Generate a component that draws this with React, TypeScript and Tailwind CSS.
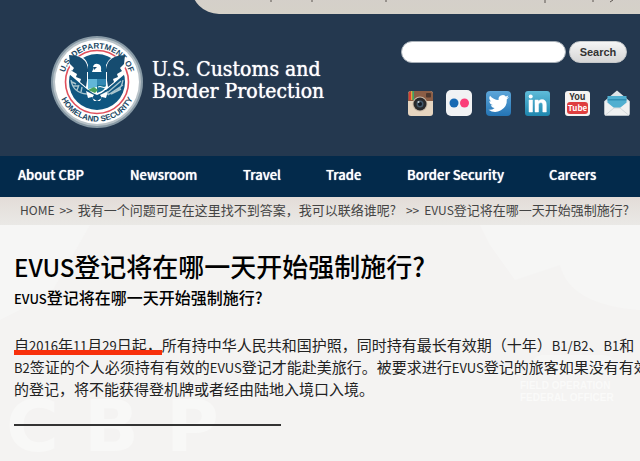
import type { ReactNode } from 'react'

const navItems = [
  { label: 'About CBP', width: 'w-[112px]' },
  { label: 'Newsroom', width: 'w-[113px]' },
  { label: 'Travel', width: 'w-[83px]' },
  { label: 'Trade', width: 'w-[81px]' },
  { label: 'Border Security', width: 'w-[142px]' },
  { label: 'Careers', width: 'w-[60px]' },
]

function Seal() {
  return (
    <svg viewBox="0 0 92 92" className="w-[92px] h-[92px] shrink-0" role="img" aria-label="Seal">
      <defs>
        <path id="arcTop" d="M 14.4 57.5 A 33.6 33.6 0 1 1 77.6 57.5" />
        <path id="arcBottom" d="M 6.5 46 A 39.5 39.5 0 0 0 85.5 46" />
        <clipPath id="disc">
          <circle cx="46" cy="46" r="27" />
        </clipPath>
      </defs>
      <circle cx="46" cy="46" r="46" fill="#8799a5" />
      <circle cx="46" cy="46" r="44" fill="#b9c3c9" />
      <circle cx="46" cy="46" r="42" fill="#fff" />
      <circle cx="46" cy="46" r="31.5" fill="#fff" stroke="#e0505c" strokeWidth="1.6" />
      <circle cx="46" cy="46" r="28" fill="#0f5680" />
      {/* eagle wings */}
      <path d="M17 18 L27 20 Q35 21 37 29 L37 37 L41 38 L51 38 L55 37 L55 29 Q58 21 66 20 L75 18 Q77 28 72 35 L74 38 L68 43 L61 49 L55 54 L37 54 L31 49 L24 43 L18 38 L21 34 Q16 28 17 18Z" fill="#fff" />
      <path d="M18 19 Q29 19 34 25 Q38 31 37 38 L35 51 L29 46 L30 43 L25 41 L26 38 L21 35 L23 32 L19 28Z" fill="#164c70" />
      <path d="M74 19 Q63 19 58 25 Q54 31 55 38 L57 51 L63 46 L62 43 L67 41 L66 38 L71 35 L69 32 L73 28Z" fill="#164c70" />
      <g fill="#1b4763" fontFamily="Liberation Sans, sans-serif" fontWeight="bold" fontSize="8" textAnchor="middle">
        <text><textPath href="#arcTop" startOffset="50%">U.S. DEPARTMENT OF</textPath></text>
        <text><textPath href="#arcBottom" startOffset="50%">HOMELAND SECURITY</textPath></text>
      </g>
      {/* head */}
      <path d="M38 21 H54 L53 28 H39Z" fill="#0f5680" />
      <path d="M41 36 Q43 33 42 31 Q43 27 47 28 Q51 29 50 35 L52 38 L40 38Z" fill="#fff" />
      <path d="M42 31 l4 0 -3 3z" fill="#164c70" />
      {/* shield */}
      <path d="M36 36 H56 V50 Q55 56 46 59 Q37 56 36 50Z" fill="#fff" />
      <path d="M37 36 H55 V43 H37Z" fill="#0f5680" />
      <path d="M37 43 H46 V51 L37 53Z" fill="#62b6d8" />
      <path d="M46 43 H55 V49 H46Z" fill="#3287b2" />
      <path d="M46 49 H55 Q55 54 46 57Z" fill="#197295" />
      <path d="M47 51 q2 -1 4 0 t4 0" stroke="#fff" strokeWidth="1" fill="none" />
      <path d="M37 54 L43 51 L47 54 L44 57Z" fill="#4aa35c" />
      {/* tail and talons */}
      <path d="M35 55 L43 59 L41 62 L46 65 L51 62 L49 59 L57 55 L55 62 L51 61 L49 65 H43 L41 61 L37 62Z" fill="#fff" />
      <g clipPath="url(#disc)" fill="none" strokeWidth="1.4">
        <path d="M20 44 Q22 57 36 58 M22 50 l5 0 M26 54 l2 -5 M30 56 l1 -5 M21 46 l4 2" stroke="#a8c4cd" />
        <path d="M72 44 Q70 57 56 58 M56 57 L70 45 M57 59 L72 49 M60 58 L70 53" stroke="#a8c4cd" />
      </g>
    </svg>
  )
}

function Social({ label, children }: { label: string; children: ReactNode }) {
  return (
    <a href="#" aria-label={label} className="block">
      <svg viewBox="0 0 26 26" className="w-[26px] h-[26px]">{children}</svg>
    </a>
  )
}

function SocialLinks() {
  return (
    <div className="flex justify-between w-[223px] ml-[6px]">
      <Social label="Instagram">
        <rect x="1" y="1" width="25" height="25" rx="3" fill="#e6d5c0" />
        <path d="M1 11V4a3 3 0 0 1 3-3h19a3 3 0 0 1 3 3v7z" fill="#8c5e46" />
        <path d="M2 2h2v8H2z" fill="#d83f38" />
        <path d="M4 1h1.500v9H4z" fill="#dfa83d" />
        <path d="M5.500 1H7v9H5.500z" fill="#39a76a" />
        <rect x="19" y="3" width="5" height="4.500" rx="1" fill="#4d382f" />
        <circle cx="13" cy="14" r="7.500" fill="#c9b9a7" />
        <circle cx="13" cy="14" r="6.500" fill="#29292c" />
        <circle cx="13" cy="14" r="3.500" fill="#43576a" />
        <circle cx="13" cy="14" r="2" fill="#141a24" />
        <circle cx="11.500" cy="12" r="1" fill="#c4cdd5" />
      </Social>
      <Social label="Flickr">
        <rect x="0" y="0" width="26" height="26" rx="5" fill="#f1f2f4" />
        <circle cx="8" cy="13" r="4.500" fill="#1769b3" />
        <circle cx="18.500" cy="13" r="4.500" fill="#fb3d78" />
      </Social>
      <Social label="Twitter">
        <defs>
          <linearGradient id="tw" x2="0" y2="1">
            <stop stopColor="#5da6da" />
            <stop offset="1" stopColor="#2474b4" />
          </linearGradient>
        </defs>
        <rect x="0" y="1" width="25" height="25" rx="4" fill="url(#tw)" />
        <path transform="translate(0 2)" d="M23 5.100a8 8 0 0 1-2.400.7 4.300 4.300 0 0 0 1.800-2.400 8 8 0 0 1-2.600 1A4.200 4.200 0 0 0 12.600 8 11.500 11.500 0 0 1 4 3.800a4.300 4.300 0 0 0 1.200 5.600 4 4 0 0 1-1.800-.5c0 2 1.400 3.700 3.300 4.100a4 4 0 0 1-1.900.1 4.200 4.200 0 0 0 3.900 2.900A8.200 8.200 0 0 1 2.500 17.800 11.700 11.700 0 0 0 20.800 7.300 8 8 0 0 0 23 5.100z" fill="#fff" />
      </Social>
      <Social label="LinkedIn">
        <defs>
          <linearGradient id="li" x2="0" y2="1">
            <stop stopColor="#5fbcd9" />
            <stop offset="1" stopColor="#1e86ae" />
          </linearGradient>
        </defs>
        <rect x="0" y="1" width="25" height="25" rx="3" fill="url(#li)" />
        <path d="M4 10h3.500v12H4zM10 10h3.300v1.600c.8-1.300 2-2 3.700-2 2.800 0 4.300 1.800 4.300 5V22h-3.500v-6.700c0-1.700-.6-2.700-2-2.700-1.500 0-2.300 1-2.300 2.700V22H10z" fill="#fff" stroke="#fff" strokeWidth=".5" />
        <circle cx="5.700" cy="6.500" r="2" fill="#fff" />
      </Social>
      <Social label="YouTube">
        <rect x="0" y="1" width="25" height="25" rx="3" fill="#f6f4f2" />
        <rect x="2" y="12" width="21" height="12" rx="3" fill="#df3e3e" />
        <g fontFamily="Noto Sans CJK SC, sans-serif" fontWeight="bold" textAnchor="middle">
          <text x="12.500" y="10" fontSize="9" fill="#333">You</text>
          <text x="12.500" y="21" fontSize="8" fill="#fff">Tube</text>
        </g>
      </Social>
      <Social label="Email">
        <path d="M0.500 11 L13 0.500 L25.500 11 V24 Q25.500 25.500 24 25.500 H2 Q0.500 25.500 0.500 24Z" fill="#dfe5e8" />
        <path d="M3.500 6h19v6.500L16 18h-6l-6.500-5.500z" fill="#50afd0" />
        <path d="M3.500 9h19v1.500h-19z" fill="#2f8fb4" />
        <path d="M0.500 11 L10 18h6l9.500-7V24q0 1.500-1.500 1.500H2Q.5 25.500.5 24z" fill="#f0f1f1" />
        <path d="M1.500 25 L10 18h6l8.500 7" fill="none" stroke="#d3d8da" />
      </Social>
    </div>
  )
}

/* Faint uniform photo and lettering behind the article */
function Backdrop() {
  return (
    <svg className="absolute inset-0 w-full h-full" viewBox="0 0 640 235" preserveAspectRatio="xMinYMin slice" aria-hidden="true">
      <path d="M0 0H90L50 70L0 95Z" fill="#f6f6f5" />
      <path d="M480 0H640V85Q570 80 560 40L515 55L490 20Z" fill="#f6f6f5" />
      <path d="M530 141q2-11 14-11h58q12 0 14 11v8h-86z" fill="#f6f6f5" />
      <g fill="#f8f8f7" fontFamily="DejaVu Sans, sans-serif" fontWeight="bold">
        <text x="6" y="226" fontSize="72">C</text>
        <text x="84" y="226" fontSize="72">B</text>
        <text x="166" y="226" fontSize="72">P</text>
      </g>
      <g fill="#fafaf9" fontFamily="Liberation Sans, sans-serif" fontWeight="bold" fontSize="10">
        <text x="520" y="164">FIELD OPERATION</text>
        <text x="520" y="176">FEDERAL OFFICER</text>
      </g>
    </svg>
  )
}

export default function App() {
  return (
    <div lang="zh-CN" className="min-h-screen bg-[#f4f3f2] overflow-hidden font-['Noto_Sans_CJK_SC',sans-serif] text-black">
      <header className="bg-[#24384f]">
        <div className="h-[14px] overflow-hidden">
          <div className="ml-[191px] -mt-5 pt-5 h-[34px] rounded-bl-[28px] bg-linear-to-b from-[#d4cecc] to-[#d5d1c8]">
            <svg className="block w-[449px] h-[3px]" viewBox="0 0 449 3" aria-hidden="true">
              <path d="M80 0v2M121 0v2M195 0v2M354 0v3M402 0v2M422 0l-3 2" stroke="#5b5450" strokeWidth="1" fill="none" />
            </svg>
          </div>
        </div>
        <div className="flex items-start justify-between h-[142px]">
          <a href="#" className="flex items-start pl-[51px] pt-[22px] text-white">
            <Seal />
            <span className="ml-[9px] mt-[22px] font-['DejaVu_Serif_Condensed','DejaVu_Serif',serif] text-[21px] leading-[22px] whitespace-nowrap text-shadow-[0_0_1px_#fff]">
              U.S. Customs and
              <br />
              Border Protection
            </span>
          </a>
          <div className="w-[239px] shrink-0 pt-[27px]">
            <form className="flex items-center gap-[3px]" onSubmit={(e) => e.preventDefault()}>
              <input type="text" aria-label="Search" className="w-[165px] h-[22px] rounded-full bg-white border border-[#a8b0b8] px-3 text-sm" />
              <button type="submit" className="w-[58px] h-[22px] rounded-full border border-[#c5c8ca] bg-linear-to-b from-[#f5f5f5] to-[#d6d6d6] font-['Liberation_Sans',sans-serif] text-[11px] leading-[18px] font-bold text-[#333]">
                Search
              </button>
            </form>
            <div className="pt-[27px]">
              <SocialLinks />
            </div>
          </div>
        </div>
        <nav className="flex items-center h-[41px] pl-[18px] pb-1 bg-[#032a4b] text-[13px] font-medium text-white whitespace-nowrap text-shadow-[0_0_1px_#fff]">
          {navItems.map((item) => (
            <a key={item.label} href="#" className={item.width}>{item.label}</a>
          ))}
        </nav>
      </header>

      <nav aria-label="Breadcrumb" className="flex items-center h-[28px] pl-5 pb-[2px] bg-linear-to-b from-[#e3dcd8] to-[#eae9e6] text-[13px] text-[#444] whitespace-nowrap">
        <a href="#" className="text-[12px]">HOME</a>
        <span className="text-[12px] mx-[5px]">&gt;&gt;</span>
        <a href="#">我有一个问题可是在这里找不到答案，我可以联络谁呢?</a>
        <span className="text-[12px] ml-[10px] mr-[5px]">&gt;&gt;</span>
        <span><span className="text-[12px]">EVUS</span>登记将在哪一天开始强制施行?</span>
      </nav>

      <main className="relative pl-[14px] pt-[22px] pb-[34px]">
        <Backdrop />
        <div className="relative">
          <h1 className="text-[26px] leading-[38px] font-medium whitespace-nowrap">
            <span className="text-[24px]">EVUS</span>登记将在哪一天开始强制施行?
          </h1>
          <h2 className="text-[16px] leading-[22px] font-medium">
            <span className="text-[13px]">EVUS</span>登记将在哪一天开始强制施行?
          </h2>
          <p className="mt-[24px] text-[15px] leading-[22px] text-[#222] whitespace-nowrap">
            <span className="relative">
              自<span className="text-[13px] leading-none">2016</span>年<span className="text-[13px] leading-none">11</span>月<span className="text-[13px] leading-none">29</span>日起，
              {/* red marker stroke over the date */}
              <span className="absolute left-0 bottom-0 w-full h-[5px] bg-[#f8300c]" />
            </span>
            所有持中华人民共和国护照，同时持有最长有效期（十年）<span className="text-[13px] leading-none">B1/B2</span>、<span className="text-[13px] leading-none">B1</span>和
            <br />
            <span className="text-[13px] leading-none">B2</span>签证的个人必须持有有效的<span className="text-[13px] leading-none">EVUS</span>登记才能赴美旅行。被要求进行<span className="text-[13px] leading-none">EVUS</span>登记的旅客如果没有有效
            <br />
            的登记，将不能获得登机牌或者经由陆地入境口入境。
          </p>
          <hr className="mt-6 w-[267px] border-0 h-[2px] bg-[#333]" />
        </div>
      </main>
    </div>
  )
}
